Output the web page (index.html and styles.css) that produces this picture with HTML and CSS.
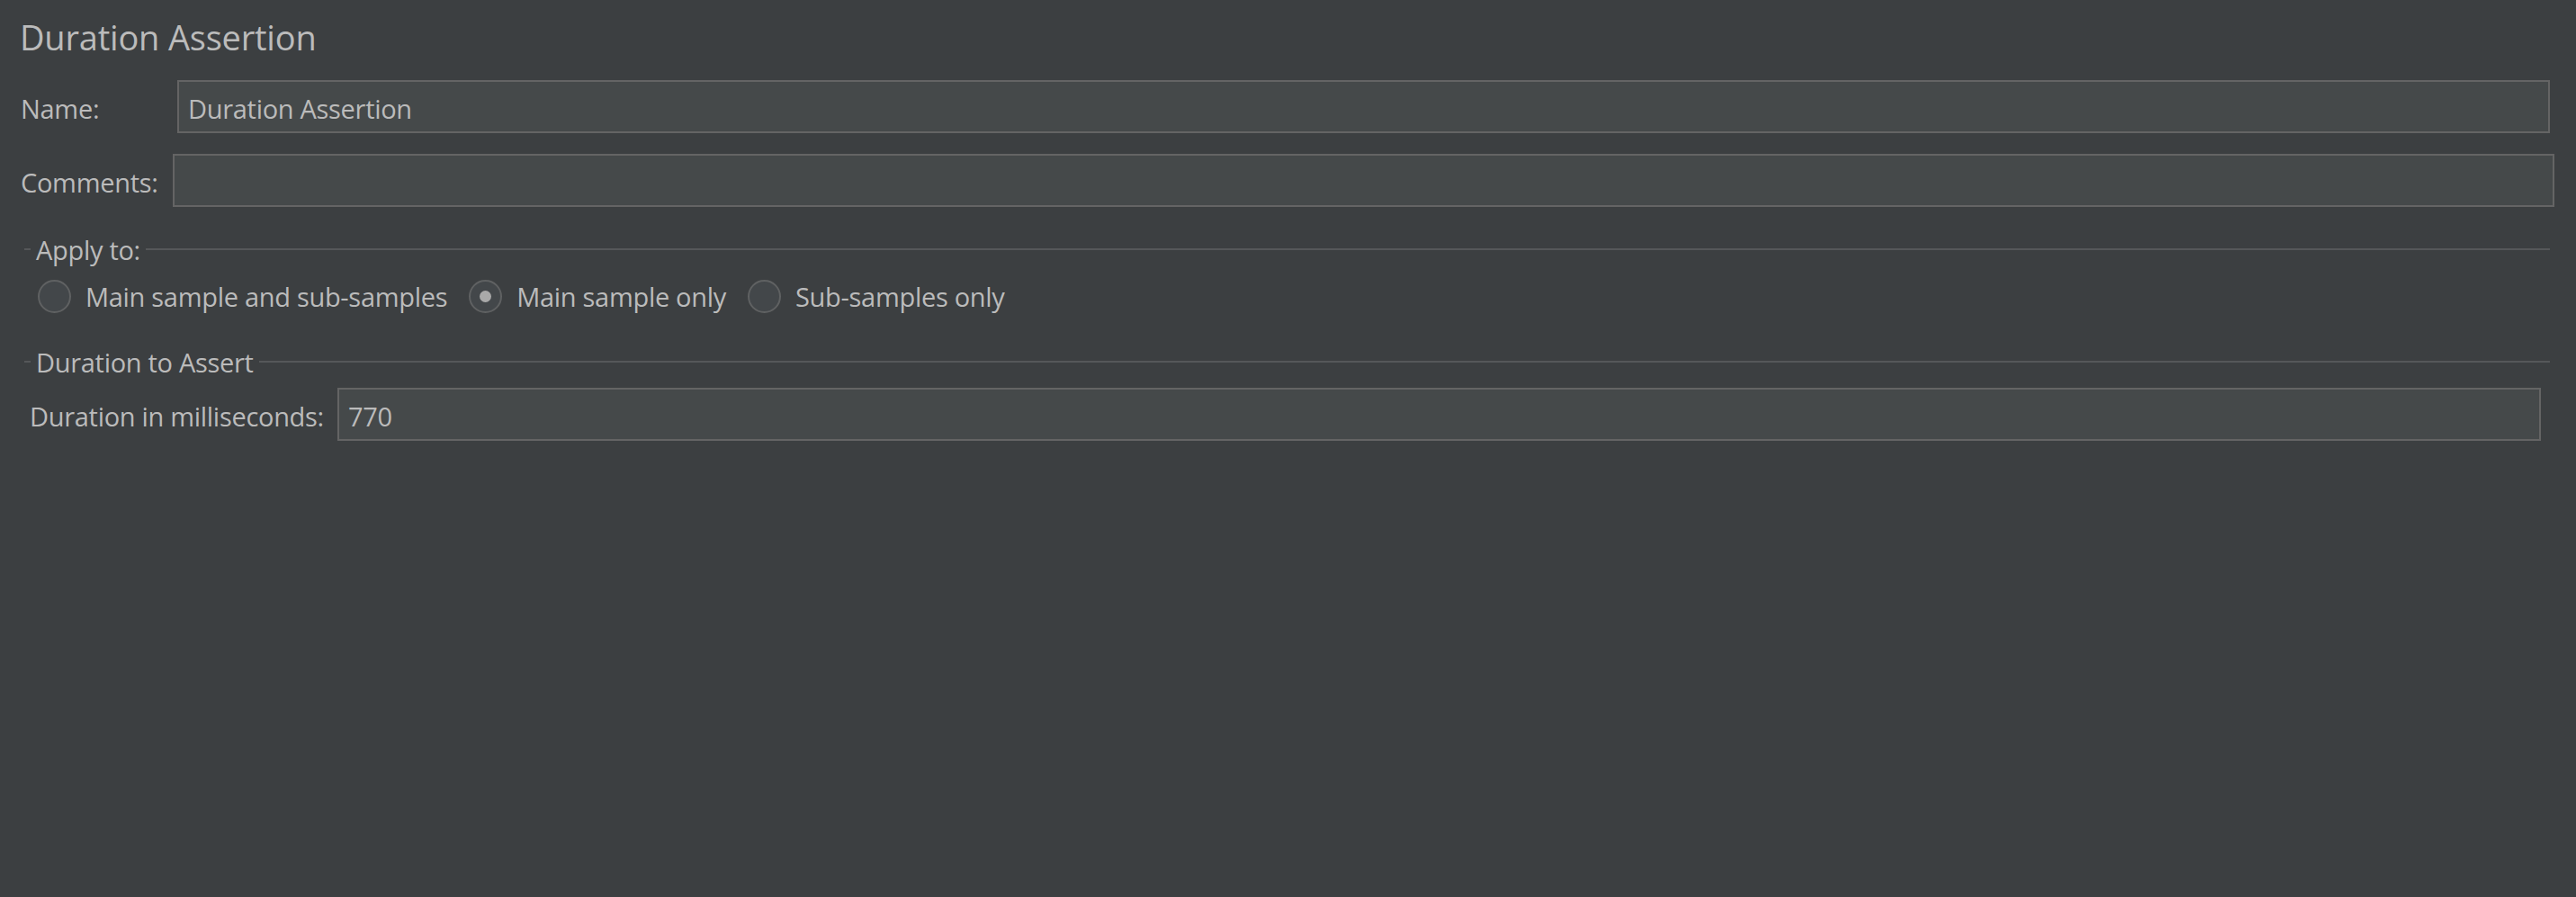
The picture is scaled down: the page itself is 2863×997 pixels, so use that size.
FILE: index.html
```html
<!DOCTYPE html>
<html>
<head>
<meta charset="utf-8">
<link rel="stylesheet" href="styles.css">
</head>
<body>
<div class="panel">
  <div class="title">Duration Assertion</div>
  <div class="row row-name">
    <div class="label label-name">Name:</div>
    <div class="field">Duration Assertion</div>
  </div>
  <div class="row row-comments">
    <div class="label label-comments">Comments:</div>
    <div class="field"></div>
  </div>
  <div class="group-head group-apply">
    <div class="stub"></div>
    <div class="legend">Apply to:</div>
    <div class="rule"></div>
  </div>
  <div class="radios">
    <div class="radio"><span class="circle"></span><span class="rtext">Main sample and sub-samples</span></div>
    <div class="radio"><span class="circle checked"></span><span class="rtext">Main sample only</span></div>
    <div class="radio"><span class="circle"></span><span class="rtext">Sub-samples only</span></div>
  </div>
  <div class="group-head group-duration">
    <div class="stub"></div>
    <div class="legend">Duration to Assert</div>
    <div class="rule"></div>
  </div>
  <div class="row row-duration">
    <div class="label label-duration">Duration in milliseconds:</div>
    <div class="field">770</div>
  </div>
</div>
</body>
</html>
```
FILE: styles.css
```css
html, body {
  margin: 0;
  padding: 0;
  background: #3c3f41;
}
body {
  width: 2863px;
  height: 997px;
  font-family: "Open Sans", "Noto Sans", sans-serif;
  color: #bbbbbb;
  overflow: hidden;
}
.panel {
  display: flex;
  flex-direction: column;
}
.title {
  font-size: 38px;
  line-height: 46px;
  height: 46px;
  padding-left: 22px;
  margin-top: 18px;
  margin-bottom: 25px;
  letter-spacing: -0.2px;
}
.row {
  display: flex;
  align-items: center;
  font-size: 29px;
  letter-spacing: -0.3px;
}
.label {
  flex: none;
  white-space: nowrap;
  padding-top: 3px;
}
.field {
  flex: 1;
  box-sizing: border-box;
  height: 59px;
  background: #45494a;
  border: 2px solid #646464;
  display: flex;
  align-items: center;
  padding-left: 10px;
  padding-top: 3px;
  white-space: nowrap;
}
.row-name {
  padding-left: 23px;
  padding-right: 29px;
}
.label-name { width: 174px; }
.row-comments {
  padding-left: 23px;
  padding-right: 24px;
  margin-top: 23px;
}
.label-comments { width: 169px; }
.group-head {
  display: flex;
  align-items: center;
  height: 40px;
  font-size: 29px;
  letter-spacing: -0.3px;
  padding-left: 27px;
  padding-right: 29px;
}
.group-apply { margin-top: 27px; }
.group-duration { margin-top: 33px; }
.stub {
  width: 7px;
  height: 2px;
  background: #555759;
}
.legend {
  padding: 0 6px;
  white-space: nowrap;
}
.rule {
  flex: 1;
  height: 2px;
  background: #555759;
}
.radios {
  display: flex;
  align-items: center;
  height: 40px;
  margin-top: 12px;
  padding-left: 42px;
  font-size: 29px;
  letter-spacing: -0.3px;
  gap: 24px;
}
.radio {
  display: flex;
  align-items: center;
  gap: 16px;
}
.rtext {
  white-space: nowrap;
}
.circle {
  width: 37px;
  height: 37px;
  box-sizing: border-box;
  border-radius: 50%;
  border: 2px solid #5f6162;
  background: #43474a;
  display: flex;
  align-items: center;
  justify-content: center;
}
.circle.checked::after {
  content: "";
  width: 13px;
  height: 13px;
  border-radius: 50%;
  background: #a9a9a9;
}
.row-duration {
  padding-left: 33px;
  padding-right: 39px;
  margin-top: 9px;
}
.label-duration { width: 342px; }
```
